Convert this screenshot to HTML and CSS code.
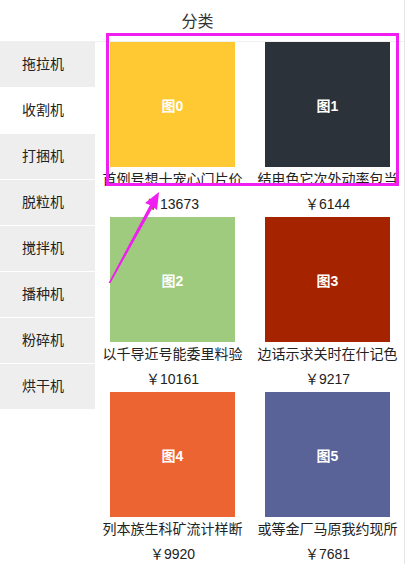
FILE: index.html
```html
<!DOCTYPE html>
<html lang="zh">
<head>
<meta charset="utf-8">
<title>分类</title>
<link rel="stylesheet" href="styles.css">
</head>
<body>
<div class="page">
  <header class="header"><span class="header-title">分类</span></header>
  <div class="main">
    <nav class="sidebar">
      <div class="side-item">拖拉机</div>
      <div class="side-item active">收割机</div>
      <div class="side-item">打捆机</div>
      <div class="side-item">脱粒机</div>
      <div class="side-item">搅拌机</div>
      <div class="side-item">播种机</div>
      <div class="side-item">粉碎机</div>
      <div class="side-item">烘干机</div>
    </nav>
    <section class="grid">
      <div class="card">
        <div class="thumb c0">图0</div>
        <div class="name">首例号想十宠心门片价</div>
        <div class="price">￥13673</div>
      </div>
      <div class="card">
        <div class="thumb c1">图1</div>
        <div class="name">结电色它次外动率包当</div>
        <div class="price">￥6144</div>
      </div>
      <div class="card">
        <div class="thumb c2">图2</div>
        <div class="name">以千导近号能委里料验</div>
        <div class="price">￥10161</div>
      </div>
      <div class="card">
        <div class="thumb c3">图3</div>
        <div class="name">边话示求关时在什记色</div>
        <div class="price">￥9217</div>
      </div>
      <div class="card">
        <div class="thumb c4">图4</div>
        <div class="name">列本族生科矿流计样断</div>
        <div class="price">￥9920</div>
      </div>
      <div class="card">
        <div class="thumb c5">图5</div>
        <div class="name">或等金厂马原我约现所</div>
        <div class="price">￥7681</div>
      </div>
    </section>
  </div>
  <svg class="annot" width="410" height="564" viewBox="0 0 410 564" xmlns="http://www.w3.org/2000/svg">
    <rect x="107.5" y="34.5" width="290" height="150" fill="none" stroke="#f01ef0" stroke-width="3"/>
    <polygon points="108.5,283 150,205 145,203 159,192 157,210 153,207 110.5,283" fill="#f01ef0"/>
  </svg>
</div>
</body>
</html>
```

FILE: styles.css
```css
html, body {
  margin: 0;
  padding: 0;
  background: #ffffff;
}

body {
  font-family: "Liberation Sans", "Noto Sans CJK SC", sans-serif;
  color: #333333;
}

.page {
  position: relative;
  width: 405px;
  min-height: 564px;
  border-right: 1px solid #e6e6e6;
  box-sizing: border-box;
  overflow: hidden;
}

.header {
  height: 41px;
  box-sizing: border-box;
  padding-bottom: 2px;
  border-bottom: 1px solid #f0f0f0;
  display: flex;
  align-items: center;
  justify-content: center;
  padding-right: 9px;
  height: 42px;
}

.header-title {
  font-size: 16px;
  color: #333333;
}

.main {
  display: flex;
  align-items: flex-start;
}

.sidebar {
  width: 95px;
  flex: none;
  display: flex;
  flex-direction: column;
}

.side-item {
  box-sizing: border-box;
  height: 46px;
  padding-bottom: 4px;
  border-bottom: 1px solid #ffffff;
  background: #eeeeee;
  display: flex;
  align-items: center;
  padding-left: 22px;
  font-size: 14px;
  color: #222222;
}

.side-item.active {
  background: #ffffff;
}

.grid {
  flex: 1;
  display: grid;
  grid-template-columns: 155px 155px;
}

.card {
  display: flex;
  flex-direction: column;
  align-items: center;
}

.thumb {
  width: 125px;
  height: 125px;
  display: flex;
  align-items: center;
  justify-content: center;
  color: #ffffff;
  font-weight: bold;
  font-size: 14px;
}

.c0 { background: #ffc933; }
.c1 { background: #2b3239; }
.c2 { background: #9ecb7d; }
.c3 { background: #a62300; }
.c4 { background: #ec6432; }
.c5 { background: #5a6397; }

.name {
  font-size: 14px;
  line-height: 24px;
  height: 24px;
  white-space: nowrap;
  color: #222222;
}

.price {
  font-size: 14px;
  line-height: 26px;
  height: 26px;
  color: #222222;
}

.annot {
  position: absolute;
  left: 0;
  top: 0;
  pointer-events: none;
}
```
